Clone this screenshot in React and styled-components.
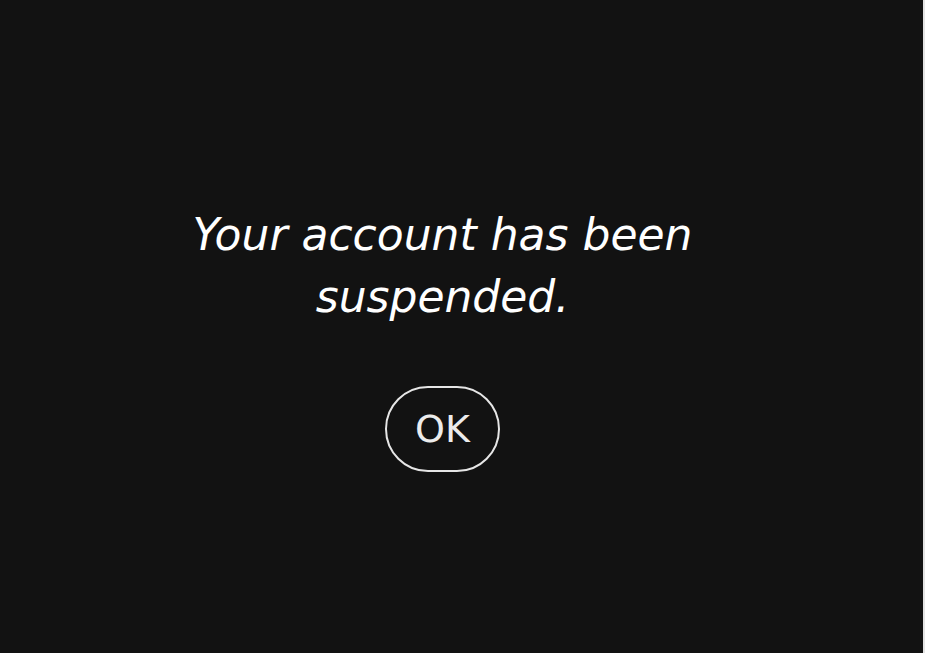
import React from 'react'
import styled, { createGlobalStyle } from 'styled-components'

const GlobalStyle = createGlobalStyle`
html, body {
    margin: 0;
    padding: 0;
    background-color: #e4e4e4;
}
`;

const App = () => {
    return (
        <>
            <GlobalStyle />
            <Container>
                <Wrapper>
                    <Message>Your account has been suspended.</Message>
                    <Button>OK</Button>
                </Wrapper>
            </Container>
        </>
    )
}

export default App;

const Container = styled.div`
width: calc(100% - 2px);
height: 100vh;
background-color: #121212;
display: flex;
align-items: center;
justify-content: center;
box-sizing: border-box;
padding: 22px 38px 0 0;
`;

const Wrapper = styled.div`
display: flex;
flex-direction: column;
align-items: center;
`;

const Message = styled.h1`
margin: 0;
max-width: 560px;
text-align: center;
font-family: "DejaVu Sans", sans-serif;
font-style: italic;
font-weight: normal;
font-size: 44px;
line-height: 62px;
color: #ffffff;
`;

const Button = styled.button`
margin-top: 58px;
width: 115px;
height: 86px;
border-radius: 43px;
border: 2px solid #e6e6e6;
background-color: transparent;
color: #ececec;
font-family: "DejaVu Sans", sans-serif;
font-size: 38px;
padding: 0;
outline: none;
cursor: pointer;
`;
